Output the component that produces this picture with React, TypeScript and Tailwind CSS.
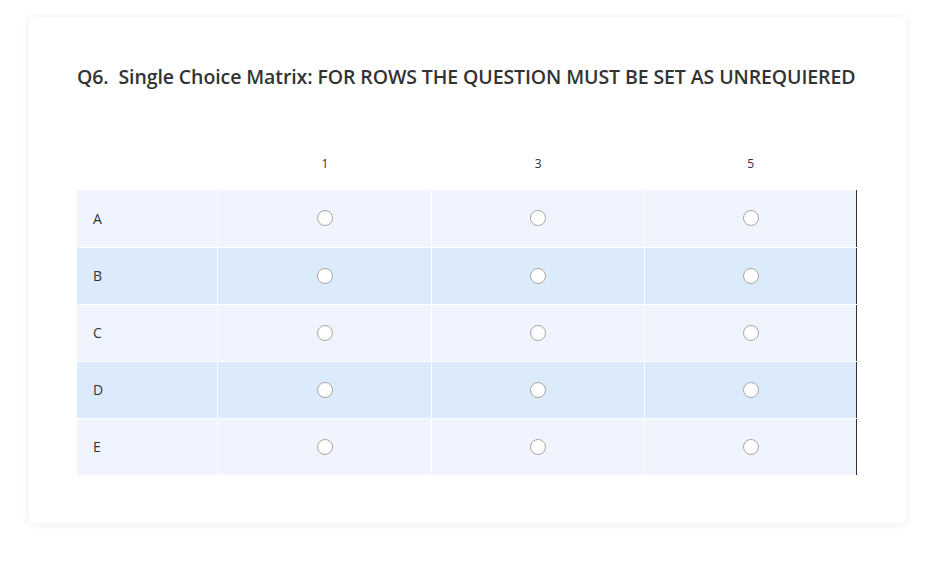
const columns = ['1', '3', '5'];
const rows = ['A', 'B', 'C', 'D', 'E'];

function Radio() {
  return (
    <span className="inline-block h-[16px] w-[16px] rounded-full border border-[#aaa5a3] bg-white" />
  );
}

export default function App() {
  return (
    <div
      className="min-h-[561px] bg-white pl-[29px] pt-[17px]"
      style={{ fontFamily: '"Open Sans", "Noto Sans", sans-serif' }}
    >
      <div className="w-[877px] rounded-[3px] bg-white px-[48px] pb-[48px] pt-[46px] shadow-[0_1px_8px_rgba(0,0,0,0.08)]">
        <h1 className="whitespace-nowrap text-[19.5px] font-semibold leading-[28px] tracking-[-0.1px] text-[#333]">
          Q6.&nbsp;&nbsp;Single Choice Matrix: FOR ROWS THE QUESTION MUST BE SET AS UNREQUIERED
        </h1>

        <table className="mt-[49px] w-[780px] border-collapse text-[14px] text-[#333]">
          <colgroup>
            <col className="w-[141px]" />
            <col className="w-[214px]" />
            <col className="w-[213px]" />
            <col className="w-[212px]" />
          </colgroup>
          <thead>
            <tr className="h-[50px]">
              <th />
              {columns.map((c) => (
                <th key={c} className="pb-[2px] text-center text-[12px] font-normal text-[#333]">
                  {c}
                </th>
              ))}
            </tr>
          </thead>
          <tbody className="border-r border-[#333]">
            {rows.map((r, i) => (
              <tr
                key={r}
                className={`h-[57px] border-b border-white last:border-b-0 ${
                  i % 2 === 0 ? 'bg-[#eff4fe]' : 'bg-[#dcebfb]'
                }`}
              >
                <td className="pl-[16px] text-left">{r}</td>
                {columns.map((c) => (
                  <td key={c} className="border-l border-white text-center align-middle">
                    <div className="flex items-center justify-center">
                      <Radio />
                    </div>
                  </td>
                ))}
              </tr>
            ))}
          </tbody>
        </table>
      </div>
    </div>
  );
}
